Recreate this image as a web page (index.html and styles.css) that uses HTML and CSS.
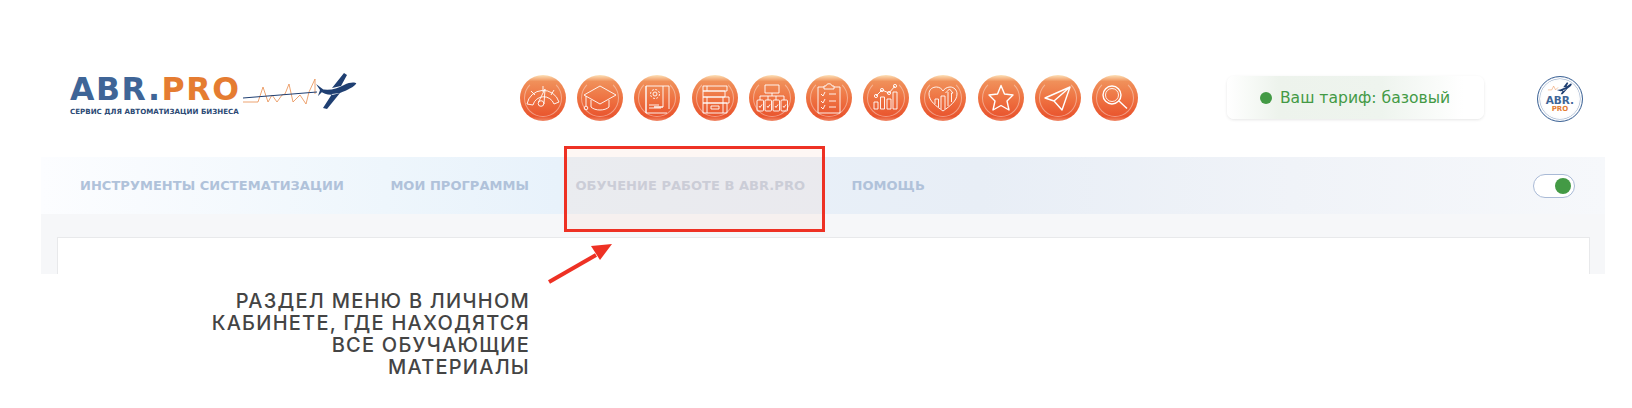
FILE: index.html
```html
<!DOCTYPE html>
<html lang="ru">
<head>
<meta charset="utf-8">
<title>ABR.PRO</title>
<link rel="stylesheet" href="styles.css">
</head>
<body>
<div class="page">
  <header class="top">
    <a class="logo">
      <div class="logo-row">
        <span class="logo-word"><span class="blue">ABR.</span><span class="orange">PRO</span></span>
        <svg class="logo-plane" viewBox="0 0 120 50" width="120" height="50">
          <path class="pulse" d="M3 35H18L23 20 28 35 32 28 37 35 42 28 45 27 49 17 53 35 60 28 66 37 69 25 75 12V27"/>
          <path class="trail" d="M3 31L77 25"/>
          <path class="plane" d="M80 22C90 24 96 22 104 18 110 15 115 15 116.300 16.600 114 20 108 23 100 26 92 29 85 28 80 24ZM92 21L104 6 107 8 101 19ZM92 27L83 41 87 42 100 26ZM76 17L84 23 78 29 80 23Z"/>
        </svg>
      </div>
      <div class="logo-tag">СЕРВИС ДЛЯ АВТОМАТИЗАЦИИ БИЗНЕСА</div>
    </a>
    <nav class="icons">
      <span class="ic"><svg viewBox="0 0 46 46"><path d="M7 29A16.500 16.500 0 0 1 39 27L34 29A11 11 0 0 0 13 30ZM15 20L11 16M23 17V11M31 20L34 15"/><path d="M18.500 27L25 14 24 29"/><circle cx="21" cy="28.500" r="2.800"/></svg></span>
      <span class="ic"><svg viewBox="0 0 46 46"><path d="M23 11L39 20 23 29 7 20ZM14 25V32C18 36 28 36 32 32V25"/><path d="M9 21V31"/><circle cx="9" cy="33" r="1.800"/></svg></span>
      <span class="ic"><svg viewBox="0 0 46 46"><path d="M33 38H12V11H35V34M12 38V11M29 11V32H20L29 32M15 30H25M15 33H27"/><circle cx="21" cy="19" r="2"/><circle cx="21" cy="19" r="4.500" stroke-dasharray="2 1.500"/></svg></span>
      <span class="ic"><svg viewBox="0 0 46 46"><path d="M11 11H35V16H11ZM11 16H33V22H11ZM11 22H37V28H11ZM11 28H35V38H11ZM15 28V38M31 28V38M15 11V16M15 22V28M31 22V28"/><rect x="19" y="31" width="8" height="3"/></svg></span>
      <span class="ic"><svg viewBox="0 0 46 46"><rect x="16" y="10" width="14" height="8"/><path d="M23 18V21M11 25V21H35V25M19 21V25M27 21V25"/><rect x="8" y="25" width="6.500" height="11" rx="1"/><rect x="16" y="25" width="6.500" height="11" rx="1"/><rect x="24" y="25" width="6.500" height="11" rx="1"/><rect x="32" y="25" width="6.500" height="11" rx="1"/><path d="M10 31L11 32.500 13 29.500M18 31L19 32.500 21 29.500M26 31L27 32.500 29 29.500M34 31L35 32.500 37 29.500"/></svg></span>
      <span class="ic"><svg viewBox="0 0 46 46"><path d="M18 12H12V38H34V12H28M18 14V11H20C20 8 26 8 26 11H28V14Z"/><path d="M15 19L17 21 19 17M23 19H30M15 26L17 28 19 24M23 26H30M15 32L17 34 19 30M23 32H30"/></svg></span>
      <span class="ic"><svg viewBox="0 0 46 46"><rect x="11" y="27" width="4" height="7"/><rect x="17.500" y="22" width="4" height="12"/><rect x="24" y="24" width="4" height="10"/><rect x="30" y="17" width="4" height="17"/><path d="M13 21L19 15 26 18 32 11"/><circle cx="13" cy="21" r="1.600"/><circle cx="19" cy="15" r="1.600"/><circle cx="26" cy="18" r="1.600"/><circle cx="32" cy="11" r="1.600"/></svg></span>
      <span class="ic"><svg viewBox="0 0 46 46"><path d="M23 36C16 31 9 26 9 19 9 14 13 12 16.500 12 19.500 12 22 14 23 16 24 14 27 12 30 12 34 12 37 15 37 19 37 26 30 31 23 36Z"/><path d="M15 29V24H18.500V32M21 34V21H25V34M28 31V17M25.500 18L29.500 14 33 18 31.500 18V27"/></svg></span>
      <span class="ic"><svg viewBox="0 0 46 46"><path class="thick" d="M23 10.500L26.500 19 35 20 29 26 31 35 23 30.500 15 35 17 26 11 20 19.500 19Z"/></svg></span>
      <span class="ic"><svg viewBox="0 0 46 46"><path class="thick" d="M10 23L35 12 27 35 19 26ZM19 26L35 12"/></svg></span>
      <span class="ic"><svg viewBox="0 0 46 46"><circle class="thick" cx="20" cy="20" r="9"/><circle cx="20" cy="20" r="6.500"/><path class="thick" d="M27 26L35 33.500"/></svg></span>
    </nav>
    <div class="tariff"><span class="dot"></span>Ваш тариф: базовый</div>
    <div class="avatar">
      <svg viewBox="0 0 46 22" width="30" height="14"><path class="pulse" d="M4 14H10L13 8 16 14 20 10"/><path class="plane" d="M18 14C26 14 32 10 40 4 42 4 42 6 40 8 36 12 30 16 24 16ZM28 10L34 2 36 3 33 9ZM28 14L24 21 27 21 34 13Z"/></svg>
      <span class="av-abr">ABR.</span>
      <span class="av-pro">PRO</span>
    </div>
  </header>

  <div class="band">
    <a class="link">ИНСТРУМЕНТЫ СИСТЕМАТИЗАЦИИ</a>
    <a class="link">МОИ ПРОГРАММЫ</a>
    <a class="link faded">ОБУЧЕНИЕ РАБОТЕ В ABR.PRO</a>
    <a class="link">ПОМОЩЬ</a>
    <span class="toggle"><span class="knob"></span></span>
  </div>
  <div class="content"><div class="card"></div></div>

  <div class="frame"></div>
  <svg class="arrow" viewBox="0 0 70 44" width="70" height="44">
    <path d="M5 41L52 14" stroke="#ee3124" stroke-width="4" fill="none"/>
    <path d="M68 3L47 5 56 19Z" fill="#ee3124"/>
  </svg>

  <div class="caption">
    <span>РАЗДЕЛ МЕНЮ В ЛИЧНОМ</span>
    <span>КАБИНЕТЕ, ГДЕ НАХОДЯТСЯ</span>
    <span>ВСЕ ОБУЧАЮЩИЕ</span>
    <span>МАТЕРИАЛЫ</span>
  </div>
</div>
</body>
</html>
```
FILE: styles.css
```css
* { box-sizing: border-box; }
html, body { margin: 0; height: 408px; overflow: hidden; background: #fff; }
body { font-family: "DejaVu Sans", sans-serif; }
.page { position: relative; width: 1632px; height: 408px; }

.top { display: flex; align-items: flex-start; height: 157px; padding: 70px 0 0 70px; }
.logo { display: block; width: 290px; flex: none; }
.logo-row { display: flex; height: 38px; align-items: center; }
.logo-word { font: 700 31.5px/38px "DejaVu Sans", sans-serif; letter-spacing: 1.6px; width: 170px; flex: none; white-space: nowrap; }
.blue { color: #3f6597; }
.orange { color: #e57c31; }
.logo-plane { flex: none; margin-top: 5px; }
.pulse { fill: none; stroke: #e98d4e; stroke-width: 0.8; }
.trail { fill: none; stroke: #1f3f72; stroke-width: 1; }
.plane { fill: #1f3f72; }
.logo-tag { font: 700 7.1px/9px "DejaVu Sans", sans-serif; color: #2c4a75; margin-top: -1px; white-space: nowrap; }

.icons { display: flex; gap: 11.2px; margin-left: 160px; margin-top: 5px; flex: none; }
.ic { position: relative; display: block; width: 46px; height: 46px; border-radius: 50%; background: linear-gradient(#fde2b8 0, #f0905a 14%, #ee7040 55%, #e9552e 90%, #f08a6a 100%); }
.ic::before { content: ""; position: absolute; inset: 4px; border-radius: 50%; border: 1px solid rgba(255, 255, 255, 0.4); border-top-color: transparent; }
.ic svg { display: block; width: 46px; height: 46px; position: relative; fill: none; stroke: #fff; stroke-width: 0.9; stroke-linejoin: round; }
.ic .thick { stroke-width: 1.4; }

.tariff { display: flex; align-items: center; width: 257px; height: 43px; margin: 6px 0 0 89px; padding-left: 33px; flex: none; border-radius: 7px; background: linear-gradient(90deg, #fff 0, #edf3ec 20%, #eef4ee 60%, #fff 92%); box-shadow: 0 1px 3px rgba(0, 0, 0, 0.1); color: #439a45; font: 400 15.6px/20px "DejaVu Sans", sans-serif; white-space: nowrap; }
.dot { width: 12px; height: 12px; border-radius: 50%; background: #439a45; margin-right: 8px; flex: none; }

.avatar { display: flex; flex-direction: column; align-items: center; width: 46px; height: 46px; margin: 6px 0 0 53px; padding-top: 4px; flex: none; border: 1.5px solid #3f6597; border-radius: 50%; background: radial-gradient(#fff 55%, #e9edf3 100%); box-shadow: inset 0 0 0 1.5px #fff, inset 0 0 0 2px #8ba3c4; font-family: "DejaVu Sans", sans-serif; font-weight: 700; }
.avatar svg { flex: none; }
.av-abr { font-size: 10.5px; line-height: 10px; color: #3f6597; }
.av-pro { font-size: 7px; line-height: 8px; color: #e57c31; }

.band { display: flex; align-items: center; gap: 46.5px; height: 57px; margin: 0 27px 0 41px; padding: 0 30px 0 39px; background: linear-gradient(90deg, #fcfdff 0, #eef6fc 22%, #e8f2fb 33%, #e8eef6 60%, #f0f3f8 80%, #f6f8fb 100%); }
.link { font: 700 13px/18px "DejaVu Sans", sans-serif; letter-spacing: 0.04px; color: #b0c2da; white-space: nowrap; }
.link.faded { color: #c3cddd; }
.toggle { display: flex; align-items: center; justify-content: flex-end; width: 42px; height: 24px; margin-left: auto; padding-right: 3px; border: 1.5px solid #a9bad6; border-radius: 12px; background: #fff; }
.knob { width: 16px; height: 16px; border-radius: 50%; background: #439a45; }

.content { height: 60px; margin: 0 27px 0 41px; padding: 23px 15px 0 16px; background: #f6f7f9; }
.card { height: 37px; background: #fff; border: 1px solid #e8e9eb; border-bottom: 0; }

.frame { position: absolute; left: 564px; top: 146px; width: 261px; height: 86px; border: 3.5px solid #ee3124; background: rgba(246, 205, 185, 0.16); }
.arrow { position: absolute; left: 544px; top: 241px; }

.caption { display: flex; flex-direction: column; align-items: flex-end; margin-top: 16px; width: 530px; font: 500 20px/22px "Inter", sans-serif; letter-spacing: 1.25px; color: #444; white-space: nowrap; }
```
